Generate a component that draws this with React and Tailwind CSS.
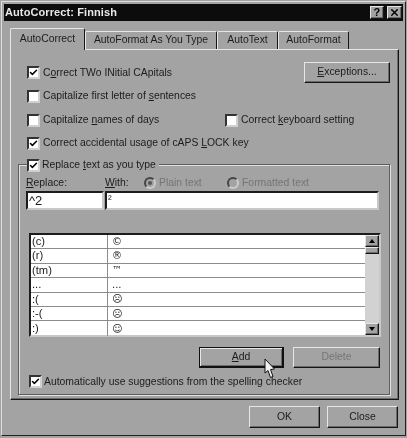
import { Check, X } from 'lucide-react';

const ROWS = [
  ['(c)', '©'],
  ['(r)', '®'],
  ['(tm)', '™'],
  ['...', '...'],
  [':(', '☹'],
  [':-(', '☹'],
  [':)', '☺'],
];

const raised = 'border border-t-[#e6e6e6] border-l-[#e6e6e6] border-r-[#151515] border-b-[#151515] shadow-[inset_-1px_-1px_0_#6a6a6a]';
const sunken = 'border-2 border-t-[#1c1c1c] border-l-[#1c1c1c] border-r-[#c8c8c8] border-b-[#c8c8c8] bg-white';

function CheckBox({ checked, className = '' }) {
  return (
    <span className={`flex h-[13px] w-[13px] shrink-0 items-center justify-center border-2 border-t-[#333] border-l-[#333] border-r-[#d0d0d0] border-b-[#d0d0d0] bg-white ${className}`}>
      {checked && <Check size={11} strokeWidth={4} className="text-black" />}
    </span>
  );
}

function Tab({ active, width, children }) {
  return (
    <div
      className={`flex items-center justify-center rounded-t-[2px] border-t border-l border-r border-t-[#e6e6e6] border-l-[#e6e6e6] border-r-[#151515] bg-[#a3a3a3] whitespace-nowrap ${
        active ? 'relative z-10 h-[22px] w-[75px]' : `mt-[3px] h-[18px] ${width}`
      }`}
    >
      {children}
    </div>
  );
}

function Button({ className = '', children }) {
  return <div className={`flex items-center justify-center ${raised} ${className}`}>{children}</div>;
}

export default function App() {
  return (
    <div className="h-[438px] w-[407px] overflow-hidden bg-[#a3a3a3] pt-[1px] text-[10.4px] leading-none text-[#1c1c1c] blur-[0.35px] [font-family:'Liberation_Sans',Arial,sans-serif]">
      <div className="mx-[1px] h-[435px] border-t border-l border-t-[#dedede] border-l-[#dedede] border-r border-b border-r-[#222] border-b-[#222] pt-[2px] px-[2px]">
        {/* Title bar */}
        <div className="flex h-[17px] items-center justify-between bg-[#0c0c0c] pr-[1px] pl-[1px] text-[11px] font-bold tracking-[0.1px] text-[#e8e8e8]">
          <span>AutoCorrect: Finnish</span>
          <div className="flex gap-[3px]">
            <div className={`flex h-[13px] w-[14px] items-center justify-center bg-[#a3a3a3] text-[11px] font-bold text-black ${raised}`}>?</div>
            <div className={`flex h-[13px] w-[15px] items-center justify-center bg-[#a3a3a3] text-black ${raised}`}>
              <X size={11} strokeWidth={3} />
            </div>
          </div>
        </div>

        {/* Tabs */}
        <div className="mt-[7px] flex h-[21px] pl-[6px]">
          <Tab active>AutoCorrect</Tab>
          <Tab width="w-[132px]">AutoFormat As You Type</Tab>
          <Tab width="w-[61px]">AutoText</Tab>
          <Tab width="w-[71px]">AutoFormat</Tab>
        </div>

        {/* Panel */}
        <div className="ml-[6px] h-[351px] w-[389px] border border-t-[#e6e6e6] border-l-[#e6e6e6] border-r-[#151515] border-b-[#151515] pt-[12px] pl-[16px] shadow-[inset_-1px_-1px_0_#6a6a6a]">
          <div className="flex h-[25px] justify-between pr-[8px]">
            <div className="flex items-start gap-[3px] pt-[4px]">
              <CheckBox checked />
              <span className="mt-[2px]">C<u>o</u>rrect TWo INitial CApitals</span>
            </div>
            <Button className="h-[21px] w-[86px]">
              <span><u>E</u>xceptions...</span>
            </Button>
          </div>
          <div className="mt-[2px] flex h-[14px] items-center gap-[3px]">
            <CheckBox />
            <span>Capitalize first letter of <u>s</u>entences</span>
          </div>
          <div className="mt-[10px] flex h-[14px] items-center">
            <div className="flex w-[198px] items-center gap-[3px]">
              <CheckBox />
              <span>Capitalize <u>n</u>ames of days</span>
            </div>
            <CheckBox />
            <span className="ml-[3px]">Correct <u>k</u>eyboard setting</span>
          </div>
          <div className="mt-[9px] flex h-[14px] items-center gap-[3px]">
            <CheckBox checked />
            <span>Correct accidental usage of cAPS <u>L</u>OCK key</span>
          </div>

          {/* Replace group */}
          <div className="relative mt-[14px] -ml-[9px] h-[231px] w-[372px] border border-[#5e5e5e] pl-[7px] shadow-[inset_1px_1px_0_#e0e0e0,1px_1px_0_#e0e0e0]">
            <div className="absolute -top-[7px] left-[8px] flex h-[14px] items-center gap-[2px] bg-[#a3a3a3] pr-[3px]">
              <CheckBox checked />
              <span className="mt-[1px]">Replace <u>t</u>ext as you type</span>
            </div>

            <div className="mt-[10px] flex h-[15px] items-center pt-[1px]">
              <span className="w-[79px]"><u>R</u>eplace:</span>
              <span className="w-[39px]"><u>W</u>ith:</span>
              <span className="flex w-[83px] items-center gap-[3px] text-[#757575]">
                <span className="flex h-[12px] w-[12px] items-center justify-center rounded-full border-2 border-t-[#444] border-l-[#444] border-r-[#ccc] border-b-[#ccc]">
                  <span className="h-[4px] w-[4px] rounded-full bg-[#555]" />
                </span>
                Plain text
              </span>
              <span className="flex items-center gap-[3px] text-[#757575]">
                <span className="h-[12px] w-[12px] rounded-full border-2 border-t-[#444] border-l-[#444] border-r-[#ccc] border-b-[#ccc]" />
                Formatted text
              </span>
            </div>
            <div className="mt-[1px] flex gap-[1px]">
              <div className={`flex h-[19px] w-[78px] items-center px-[1px] text-[13px] ${sunken}`}>^2</div>
              <div className={`flex h-[19px] w-[274px] items-start pt-[1px] pl-[1px] text-[11px] ${sunken}`}>²</div>
            </div>

            {/* Replacement list */}
            <div className={`mt-[23px] ml-[3px] flex h-[104px] w-[352px] text-[11.2px] ${sunken}`}>
              <div className="flex-1">
                {ROWS.map(([from, to]) => (
                  <div key={from} className="flex h-[14.4px] border-b border-[#8c8c8c] last:border-b-0">
                    <span className="flex w-[77px] items-center border-r border-[#8c8c8c] pl-[1px]">{from}</span>
                    <span className="flex items-center pl-[4px] text-[10px] [font-family:'DejaVu_Sans',sans-serif]">{to}</span>
                  </div>
                ))}
              </div>
              <div className="flex w-[14px] flex-col bg-[#d2d2d2]">
                <div className={`flex h-[12px] items-center justify-center bg-[#a3a3a3] ${raised}`}>
                  <span className="border-x-[3px] border-b-[4px] border-x-transparent border-b-black" />
                </div>
                <div className={`h-[7px] bg-[#a3a3a3] ${raised}`} />
                <div className="flex-1" />
                <div className={`flex h-[12px] items-center justify-center bg-[#a3a3a3] ${raised}`}>
                  <span className="border-x-[3px] border-t-[4px] border-x-transparent border-t-black" />
                </div>
              </div>
            </div>

            {/* List buttons */}
            <div className="relative mt-[10px] ml-[173px] flex gap-[9px]">
              <div className="flex h-[21px] w-[85px] items-center justify-center border border-[#111] border-r-2 border-b-2 shadow-[inset_1px_1px_0_#e6e6e6,inset_-1px_-1px_0_#6a6a6a]">
                <span><u>A</u>dd</span>
              </div>
              <Button className="h-[21px] w-[87px] text-[#757575]">Delete</Button>
              <svg className="absolute top-[11px] left-[65px] z-10" width="12" height="21" viewBox="0 0 12 21">
                <path d="M1 1 L1 15 L4 12.5 L6.5 19.5 L9 18.5 L6.5 11.5 L10.5 11 Z" fill="#f2f2f2" stroke="#111" strokeWidth="1" />
              </svg>
            </div>

            <div className="mt-[7px] ml-[3px] flex h-[13px] items-center gap-[2px]">
              <CheckBox checked />
              <span className="mt-[1px]">Automatically use suggestions from the spelling checker</span>
            </div>
          </div>
        </div>

        {/* Dialog buttons */}
        <div className="mt-[6px] flex justify-end gap-[7px] pr-[5px]">
          <Button className="h-[22px] w-[71px]">OK</Button>
          <Button className="h-[22px] w-[71px]">Close</Button>
        </div>
      </div>
    </div>
  );
}
